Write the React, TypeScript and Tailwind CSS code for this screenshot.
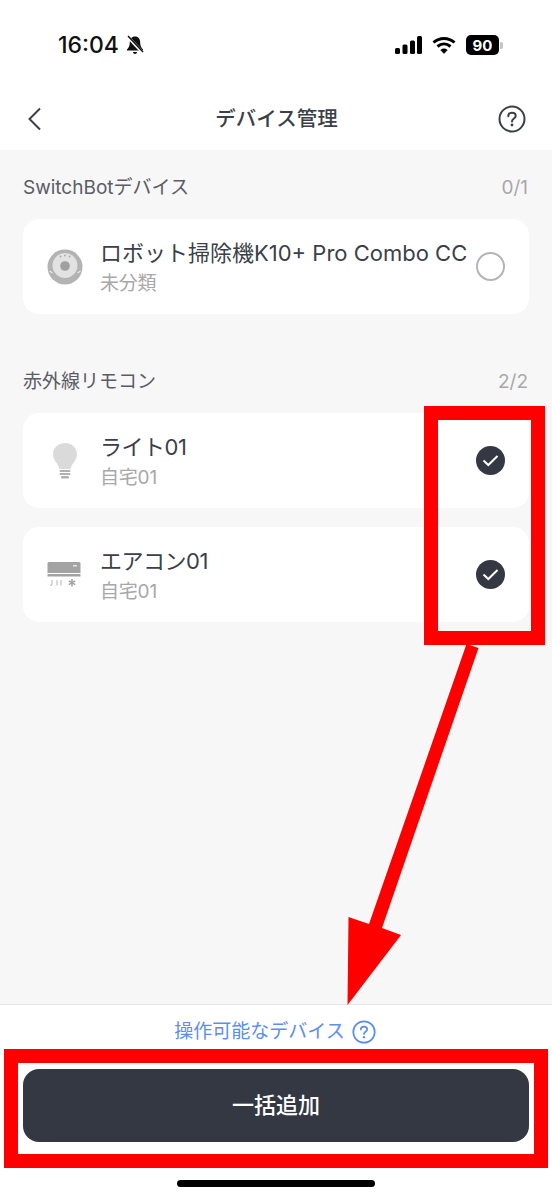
import React from 'react';

const FONT = "font-['Inter','Noto_Sans_CJK_JP',sans-serif]";

const RobotIcon = () => (
  <svg width="36" height="36" viewBox="0 0 36 36">
    <circle cx="18" cy="18" r="17.5" fill="#b3b3b3" />
    <circle cx="18" cy="16.5" r="12.5" fill="#e2e2e2" />
    <path d="M2.5 22 L5.5 24 M33.5 22 L30.5 24" stroke="#e8e8e8" strokeWidth="1.2" />
    <circle cx="18" cy="17" r="4.8" fill="#a0a0a0" />
    <circle cx="13.5" cy="7.5" r="0.9" fill="#a8a8a8" />
    <circle cx="18" cy="6.5" r="0.9" fill="#a8a8a8" />
    <circle cx="22.5" cy="7.5" r="0.9" fill="#a8a8a8" />
  </svg>
);

const BulbIcon = () => (
  <svg width="36" height="36" viewBox="0 0 36 36">
    <path d="M18 0 C10.8 0 6 5.3 6 11.5 C6 17.5 11.5 20.5 12.5 26 H23.5 C24.5 20.5 30 17.5 30 11.5 C30 5.3 25.2 0 18 0 Z" fill="#dadada" />
    <rect x="12.5" y="27" width="11" height="2" rx="1" fill="#b0b0b0" />
    <rect x="12.5" y="30" width="11" height="2" rx="1" fill="#b0b0b0" />
    <rect x="14" y="33" width="8" height="2.5" rx="1.2" fill="#b0b0b0" />
  </svg>
);

const AirconIcon = () => (
  <svg width="36" height="36" viewBox="0 0 36 36">
    <path d="M0.5 6.5 a1.5 1.5 0 0 1 1.5 -1.5 H32 a1.5 1.5 0 0 1 1.5 1.5 V16 H0.5 Z" fill="#a3a3a3" />
    <rect x="0.5" y="17" width="33" height="2.5" fill="#a3a3a3" />
    <rect x="26" y="8" width="4" height="1.5" fill="#e5e5e5" />
    <path d="M5 23 V27 Q5 28.5 3 28.5 M10 23 V28.5 M14 23 V28.5" fill="none" stroke="#b5b5b5" strokeWidth="1" />
    <path d="M25 22 V29.5 M21.8 23.8 L28.2 27.7 M28.2 23.8 L21.8 27.7" stroke="#a3a3a3" strokeWidth="1.5" />
  </svg>
);

const HelpIcon = ({ color, size, stroke }: { color: string; size: number; stroke: number }) => (
  <svg width={size} height={size} viewBox="0 0 28 28" fill="none">
    <circle cx="14" cy="14" r={14 - stroke / 2 - 0.5} stroke={color} strokeWidth={stroke} />
    <path d="M10.3 11.2 C10.3 9 12 7.8 14 7.8 C16 7.8 17.7 9 17.7 11 C17.7 13.4 14 13.6 14 16.4" stroke={color} strokeWidth={stroke} strokeLinecap="round" />
    <circle cx="14" cy="20" r="1.4" fill={color} />
  </svg>
);

const Check = () => (
  <div className="w-[29px] h-[29px] rounded-full bg-[#343843] flex items-center justify-center">
    <svg width="17" height="13" viewBox="0 0 17 13" fill="none">
      <path d="M1.5 6.5 L6.3 11 L15.5 2" stroke="#fff" strokeWidth="2" />
    </svg>
  </div>
);

const Radio = () => <div className="w-[29px] h-[29px] rounded-full border-2 border-[#b5b5b5]" />;

const DeviceCard = ({ icon, name, room, checked, tight }: { icon: React.ReactNode; name: string; room: string; checked: boolean; tight?: boolean }) => (
  <div className="h-[95px] bg-white rounded-[16px] flex items-center pl-[24px] pr-[24px]">
    <div className="w-[36px] h-[36px] mr-[18px] shrink-0">{icon}</div>
    <div className="flex-1 min-w-0 -ml-[1px] pt-[2px]">
      <div className={`text-[22px] leading-[30px] text-[#3b3f49] whitespace-nowrap ${tight ? 'tracking-[-0.5px]' : ''}`}>{name}</div>
      <div className="mt-[2px] text-[19px] leading-[28px] text-[#a8a8a8] tracking-[-0.2px]">{room}</div>
    </div>
    {checked ? <Check /> : <Radio />}
  </div>
);

const SectionHead = ({ title, count }: { title: string; count: string }) => (
  <div className="flex items-center justify-between h-[26px] pt-[2px] text-[19px]">
    <span className="text-[#5a5d66]">{title}</span>
    <span className="text-[#a8a8a8] mr-[1px]">{count}</span>
  </div>
);

export default function App() {
  return (
    <div className={`relative w-[552px] h-[1200px] flex flex-col bg-white overflow-hidden ${FONT}`}>
      {/* status bar */}
      <div className="h-[88px] flex items-start justify-between pt-[30px] pl-[58px] pr-[49px]">
        <div className="flex items-center gap-[7px] h-[30px]">
          <span className="text-[23px] font-medium text-[#111]">16:04</span>
          <svg width="18" height="20" viewBox="0 0 18 20">
            <path d="M9 1.5 C5.5 1.5 3.8 4.2 3.8 7.5 C3.8 11 2.8 12.5 1 14.5 V15.5 H17 V14.5 C15.2 12.5 14.2 11 14.2 7.5 C14.2 4.2 12.5 1.5 9 1.5 Z" fill="#111" />
            <path d="M7 17 H11 A2 2 0 0 1 7 17 Z" fill="#111" />
            <path d="M1.5 1.5 L17 18" stroke="#fff" strokeWidth="3.2" />
            <path d="M2 1 L17 17" stroke="#111" strokeWidth="1.4" />
          </svg>
        </div>
        <div className="flex items-center h-[30px]">
          <svg width="27" height="18" viewBox="0 0 27 18" className="mr-[10px]" fill="#000">
            <rect x="0" y="12" width="5" height="6" rx="1.5" />
            <rect x="7.5" y="8.5" width="5" height="9.5" rx="1.5" />
            <rect x="15" y="4.5" width="5" height="13.5" rx="1.5" />
            <rect x="22" y="0" width="5" height="18" rx="1.5" />
          </svg>
          <svg width="24" height="18" viewBox="0 0 24 18" className="mr-[10px]" fill="none" stroke="#000" strokeWidth="3">
            <path d="M1.5 6.5 C7.5 1 16.5 1 22.5 6.5" />
            <path d="M5.5 10.5 C9.5 7 14.5 7 18.5 10.5" />
            <path d="M12 17.5 L8.7 14 C10.5 12.4 13.5 12.4 15.3 14 Z" fill="#000" strokeWidth="0.5" />
          </svg>
          <div className="w-[33px] h-[20px] rounded-[5px] bg-black flex items-center justify-center text-[15px] font-bold text-white leading-none">90</div>
          <div className="w-[3px] h-[7px] ml-[1px] rounded-r-[2px] bg-[#c4c4c4]" />
        </div>
      </div>

      {/* nav */}
      <div className="h-[62px] flex items-center pl-[27px] pr-[26px]">
        <div className="flex-1">
          <svg width="14" height="24" viewBox="0 0 14 24" fill="none">
            <path d="M13 1.5 L2.5 12 L13 22.5" stroke="#3b3f49" strokeWidth="2" />
          </svg>
        </div>
        <span className="text-[20.5px] font-medium text-[#3b3f49]">デバイス管理</span>
        <div className="flex-1 flex justify-end">
          <HelpIcon color="#3b3f49" size={28} stroke={2} />
        </div>
      </div>

      {/* list */}
      <div className="flex-1 bg-[#f7f7f7] px-[23px] pt-[24px]">
        <SectionHead title="SwitchBotデバイス" count="0/1" />
        <div className="mt-[19px]">
          <DeviceCard icon={<RobotIcon />} name="ロボット掃除機K10+ Pro Combo CC" room="未分類" checked={false} />
        </div>
        <div className="mt-[54px]">
          <SectionHead title="赤外線リモコン" count="2/2" />
        </div>
        <div className="mt-[19px] flex flex-col gap-[19px]">
          <DeviceCard icon={<BulbIcon />} name="ライト01" room="自宅01" checked tight />
          <DeviceCard icon={<AirconIcon />} name="エアコン01" room="自宅01" checked tight />
        </div>
      </div>

      {/* footer */}
      <div className="h-[196px] border-t border-[#e5e5e5] flex flex-col items-center">
        <div className="h-[54px] flex items-center gap-[7px] -ml-[2px]">
          <span className="text-[19px] text-[#5b8ef0]">操作可能なデバイス</span>
          <HelpIcon color="#5b8ef0" size={24} stroke={2} />
        </div>
        <button className="mt-[10px] w-[506px] h-[73px] rounded-[16px] bg-[#343843] text-white text-[22px] font-medium">一括追加</button>
        <div className="w-[198px] h-[7px] rounded-full bg-black mt-[38px]" />
      </div>

      {/* red annotations */}
      <div className="absolute left-[424px] top-[406px] w-[121px] h-[239px] border-[14px] border-[#ff0000]" />
      <div className="absolute left-[4px] top-[1049px] w-[544px] h-[119px] border-[14px] border-[#ff0000]" />
      <svg className="absolute left-0 top-0 pointer-events-none" width="552" height="1200" viewBox="0 0 552 1200">
        <polygon fill="#ff0000" points="466.5,644 478.5,648 382,928 401,935 347.5,1005 348.5,917 369,924" />
      </svg>
    </div>
  );
}
